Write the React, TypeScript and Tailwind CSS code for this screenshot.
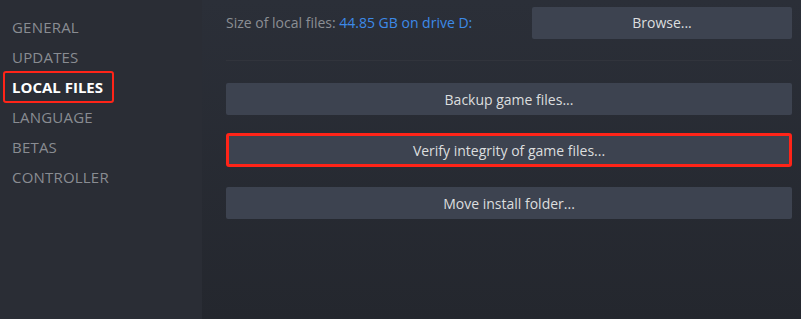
const navItems = ['GENERAL', 'UPDATES', 'LOCAL FILES', 'LANGUAGE', 'BETAS', 'CONTROLLER'];

function ActionButton({ label, highlighted }: { label: string; highlighted?: boolean }) {
  if (highlighted) {
    return (
      <div className="h-[34px] rounded-[3px] border-[3px] border-[#ff2418] bg-[#3d4350] flex items-center justify-center text-[14px] text-[#dcdedf]">
        {label}
      </div>
    );
  }
  return (
    <div className="h-8 rounded-[2px] bg-[#3d4350] flex items-center justify-center text-[14px] text-[#dcdedf]">
      {label}
    </div>
  );
}

export default function App() {
  return (
    <div
      className="w-[801px] h-[319px] flex overflow-hidden bg-[#252830]"
      style={{ fontFamily: '"Open Sans", Lato, Arial, sans-serif' }}
    >
      <div className="w-[202px] shrink-0 bg-[#2a2d35] pt-[12px] flex flex-col">
        {navItems.map((item) =>
          item === 'LOCAL FILES' ? (
            <div key={item} className="h-[30px] flex items-center">
              <span className="ml-[3px] h-[32px] w-[111px] rounded-[3px] border-2 border-[#ff2418] flex items-center pl-[7px] text-[15px] font-bold text-white">
                {item}
              </span>
            </div>
          ) : (
            <div key={item} className="h-[30px] flex items-center pl-3 text-[15px] tracking-[0.2px] text-[#898c92]">
              {item}
            </div>
          )
        )}
      </div>

      <div className="flex-1 pl-6 pr-[9px] bg-gradient-to-b from-[#2b2f38] to-[#24272e]">
        <div className="h-[44px] flex items-center justify-between pt-[1px]">
          <div className="text-[14px] text-[#8b8e94]">
            Size of local files: <span className="text-[#3d8ae8]">44.85 GB on drive D:</span>
          </div>
          <div className="w-[260px] h-8 rounded-[2px] bg-[#3d4350] flex items-center justify-center text-[14px] text-[#dcdedf]">
            Browse...
          </div>
        </div>
        <div className="mt-[16px] h-px bg-[#31343c]" />
        <div className="mt-[22px] flex flex-col">
          <ActionButton label="Backup game files..." />
          <div className="mt-[18px]">
            <ActionButton label="Verify integrity of game files..." highlighted />
          </div>
          <div className="mt-[20px]">
            <ActionButton label="Move install folder..." />
          </div>
        </div>
      </div>
    </div>
  );
}
